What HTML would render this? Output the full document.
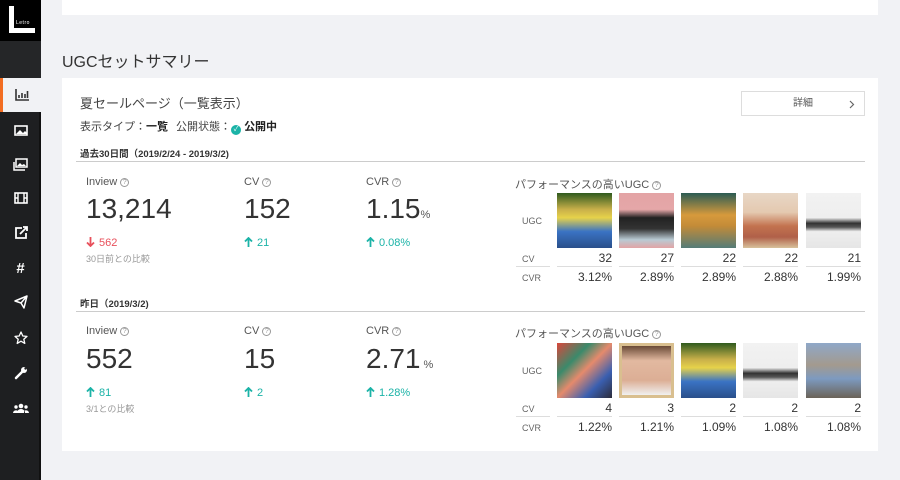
<!DOCTYPE html>
<html><head><meta charset="utf-8"><style>
*{margin:0;padding:0;box-sizing:border-box}
body{width:900px;height:480px;overflow:hidden;background:#f1f2f5;font-family:"Liberation Sans","Noto Sans CJK JP",sans-serif;color:#333;position:relative}
.a{position:absolute;white-space:nowrap}
#sb{position:absolute;left:0;top:0;width:41px;height:480px;background:#1e1f21;border-right:2px solid #111}
.ic{position:absolute;left:0;width:41px;height:34px;display:flex;align-items:center;justify-content:center;color:#fff;font-size:14px;font-weight:bold}
.card{position:absolute;background:#fff}
.sm{font-size:11px;color:#444}
.lbl{font-size:11px;color:#555}
.q{display:inline-block;width:9px;height:9px;border:1px solid #999;border-radius:50%;font-size:7px;line-height:7px;text-align:center;color:#999;vertical-align:1px;margin-left:3px}
.big{font-size:28px;color:#333}
.up{font-size:11px;color:#1bb3a7}
.dn{font-size:11px;color:#e8505b}
.gr{font-size:9px;color:#999}
.img{position:absolute;width:55px;height:55px}
.num{position:absolute;width:55px;text-align:right;font-size:12px;color:#333}
.ln{position:absolute;height:1px;background:#ddd}
.ar{display:inline-block;vertical-align:-1px;margin-right:4px}
</style></head><body>
<div id="sb">
 <div style="position:absolute;left:0;top:0;width:41px;height:41px;background:#000">
  <div style="position:absolute;left:9px;top:6px;width:5px;height:27px;background:#fff"></div>
  <div style="position:absolute;left:9px;top:28px;width:26px;height:5px;background:#fff"></div>
  <div class="a" style="left:16px;top:20px;font-size:5px;color:#fff;letter-spacing:.5px">Letro</div>
 </div>
 <div style="position:absolute;left:0;top:41px;width:41px;height:37px;background:#252628"></div>
 <div class="ic" style="top:78px;background:#f1f2f5;border-left:3px solid #f26d21;color:#333">
  <svg width="14" height="12" viewBox="0 0 14 12"><path d="M1 0v11h13" stroke="#333" stroke-width="1.6" fill="none"/><path d="M4 6v3M7 4v5M10 5v4M12.5 2v7" stroke="#333" stroke-width="1.6"/></svg></div>
 <div class="ic" style="top:113px"><svg width="14" height="11"><rect x="1" y="1" width="12" height="9" fill="none" stroke="#fff" stroke-width="1.6"/><path d="M2 9l4-4 3 3 2-2 2 2v1z" fill="#fff"/></svg></div>
 <div class="ic" style="top:147px"><svg width="15" height="13"><rect x="3" y="1" width="11" height="8" fill="none" stroke="#fff" stroke-width="1.5"/><path d="M1 4v8h11" stroke="#fff" stroke-width="1.5" fill="none"/><path d="M4 8l3-3 2 2 2-1 2 2z" fill="#fff"/></svg></div>
 <div class="ic" style="top:181px"><svg width="14" height="12"><rect x="1" y="1" width="12" height="10" fill="none" stroke="#fff" stroke-width="1.6"/><path d="M4 1v10M10 1v10M1 6h3M10 6h3" stroke="#fff" stroke-width="1.4"/></svg></div>
 <div class="ic" style="top:216px"><svg width="14" height="14"><path d="M8 2H2v10h10V7" fill="none" stroke="#fff" stroke-width="1.8"/><path d="M6 8l7-7M9 1h4v4" fill="none" stroke="#fff" stroke-width="1.8"/></svg></div>
 <div class="ic" style="top:251px;font-size:15px">#</div>
 <div class="ic" style="top:285px"><svg width="14" height="14"><path d="M1 6L13 1 10 13 7 8z M7 8l6-7" fill="none" stroke="#fff" stroke-width="1.5" stroke-linejoin="round"/></svg></div>
 <div class="ic" style="top:321px"><svg width="14" height="14"><path d="M7 1l1.8 4 4.2.4-3.2 2.8 1 4.2L7 10.2 3.2 12.4l1-4.2L1 5.4l4.2-.4z" fill="none" stroke="#fff" stroke-width="1.3" stroke-linejoin="round"/></svg></div>
 <div class="ic" style="top:356px"><svg width="14" height="14"><path d="M2 12l6-6" stroke="#fff" stroke-width="2.5" stroke-linecap="round"/><circle cx="10" cy="4" r="3" fill="#fff"/><circle cx="11.5" cy="2.5" r="1.2" fill="#1e1f21"/></svg></div>
 <div class="ic" style="top:391px"><svg width="16" height="10"><circle cx="8" cy="3" r="2.3" fill="#fff"/><circle cx="3" cy="4" r="1.7" fill="#fff"/><circle cx="13" cy="4" r="1.7" fill="#fff"/><path d="M4 10a4 4 0 018 0z M0 10a3 3 0 015-2v2z M16 10a3 3 0 00-5-2v2z" fill="#fff"/></svg></div>
</div>

<div class="card" style="left:62px;top:0;width:816px;height:15px"></div>
<div class="a" style="left:62px;top:48px;font-size:16px;color:#333">UGCセットサマリー</div>

<div class="card" style="left:62px;top:78px;width:816px;height:373px"></div>
<div class="a" style="left:80px;top:93px;font-size:13px;color:#444">夏セールページ（一覧表示）</div>
<div class="a sm" style="left:80px;top:118px">表示タイプ：<b style="color:#222">一覧</b></div>
<div class="a sm" style="left:176px;top:118px">公開状態：<span style="display:inline-block;width:10px;height:10px;border-radius:50%;background:#1bb3a7;vertical-align:-1px;color:#fff;font-size:7px;text-align:center;line-height:10px">✓</span> <b style="color:#222">公開中</b></div>
<div class="a" style="left:741px;top:91px;width:124px;height:25px;border:1px solid #ddd;font-size:10px;color:#555;text-align:center;line-height:23px">詳細<svg style="position:absolute;right:9px;top:8px" width="6" height="9"><path d="M1 1l3.5 3.5L1 8" fill="none" stroke="#666" stroke-width="1.2"/></svg></div>

<div class="a" style="left:80px;top:146px;font-size:9.5px;color:#333;font-weight:bold">過去30日間（2019/2/24 - 2019/3/2)</div>
<div class="ln" style="left:76px;top:161px;width:789px;background:#ccc"></div>

<div class="a lbl" style="left:86px;top:176px">Inview<span class="q">?</span></div>
<div class="a big" style="left:86px;top:193px">13,214</div>
<div class="a dn" style="left:86px;top:237px"><svg class="ar" width="9" height="10"><path d="M4.5 0v9M1 5.5l3.5 3.5L8 5.5" fill="none" stroke="#e8505b" stroke-width="1.8"/></svg>562</div>
<div class="a gr" style="left:86px;top:252px">30日前との比較</div>
<div class="a lbl" style="left:244px;top:176px">CV<span class="q">?</span></div>
<div class="a big" style="left:244px;top:193px">152</div>
<div class="a up" style="left:244px;top:237px"><svg class="ar" width="9" height="10"><path d="M4.5 10V1M1 4.5L4.5 1 8 4.5" fill="none" stroke="#1bb3a7" stroke-width="1.8"/></svg>21</div>
<div class="a lbl" style="left:366px;top:176px">CVR<span class="q">?</span></div>
<div class="a big" style="left:366px;top:193px">1.15<span style="font-size:11px;color:#555">%</span></div>
<div class="a up" style="left:366px;top:237px"><svg class="ar" width="9" height="10"><path d="M4.5 10V1M1 4.5L4.5 1 8 4.5" fill="none" stroke="#1bb3a7" stroke-width="1.8"/></svg>0.08%</div>

<div class="a lbl" style="left:515px;top:176px">パフォーマンスの高いUGC<span class="q">?</span></div>
<div class="a gr" style="left:522px;top:216px;color:#666">UGC</div>
<div class="a gr" style="left:522px;top:254px;color:#666">CV</div>
<div class="a gr" style="left:522px;top:273px;color:#666">CVR</div>
<div class="ln" style="left:516px;top:266px;width:34px"></div>
<div class="img" style="left:557px;top:193px;background:linear-gradient(180deg,#2f5a1e 0,#c9b04a 30%,#e6d24a 45%,#3a73c4 70%,#2a4f8a 100%)"></div>
<div class="img" style="left:619px;top:193px;background:linear-gradient(180deg,#e3a3a5 0,#e5a7a8 30%,#222 45%,#333 65%,#b9cbd4 85%,#e2a4a5 100%)"></div>
<div class="img" style="left:681px;top:193px;background:linear-gradient(180deg,#2b5c54 0,#d79a3c 40%,#c38b38 60%,#557c78 100%)"></div>
<div class="img" style="left:743px;top:193px;background:linear-gradient(180deg,#e8d7c6 0,#e4c9b0 35%,#c3734f 60%,#b06049 80%,#d8c19c 100%)"></div>
<div class="img" style="left:806px;top:193px;background:linear-gradient(180deg,#f2f2f2 0,#eee 45%,#333 55%,#555 62%,#eee 70%,#e6e6e6 100%)"></div>
<div class="num" style="left:557px;top:251px">32</div><div class="num" style="left:619px;top:251px">27</div><div class="num" style="left:681px;top:251px">22</div><div class="num" style="left:743px;top:251px">22</div><div class="num" style="left:806px;top:251px">21</div>
<div class="ln" style="left:557px;top:266px;width:55px"></div><div class="ln" style="left:619px;top:266px;width:55px"></div><div class="ln" style="left:681px;top:266px;width:55px"></div><div class="ln" style="left:743px;top:266px;width:55px"></div><div class="ln" style="left:806px;top:266px;width:55px"></div>
<div class="num" style="left:549px;top:270px;width:63px">3.12%</div><div class="num" style="left:611px;top:270px;width:63px">2.89%</div><div class="num" style="left:673px;top:270px;width:63px">2.89%</div><div class="num" style="left:735px;top:270px;width:63px">2.88%</div><div class="num" style="left:798px;top:270px;width:63px">1.99%</div>

<div class="a" style="left:80px;top:296px;font-size:9.5px;color:#333;font-weight:bold">昨日（2019/3/2)</div>
<div class="ln" style="left:76px;top:311px;width:789px;background:#ccc"></div>

<div class="a lbl" style="left:86px;top:325px">Inview<span class="q">?</span></div>
<div class="a big" style="left:86px;top:343px">552</div>
<div class="a up" style="left:86px;top:387px"><svg class="ar" width="9" height="10"><path d="M4.5 10V1M1 4.5L4.5 1 8 4.5" fill="none" stroke="#1bb3a7" stroke-width="1.8"/></svg>81</div>
<div class="a gr" style="left:86px;top:402px">3/1との比較</div>
<div class="a lbl" style="left:244px;top:325px">CV<span class="q">?</span></div>
<div class="a big" style="left:244px;top:343px">15</div>
<div class="a up" style="left:244px;top:387px"><svg class="ar" width="9" height="10"><path d="M4.5 10V1M1 4.5L4.5 1 8 4.5" fill="none" stroke="#1bb3a7" stroke-width="1.8"/></svg>2</div>
<div class="a lbl" style="left:366px;top:325px">CVR<span class="q">?</span></div>
<div class="a big" style="left:366px;top:343px">2.71<span style="font-size:11px;color:#555"> %</span></div>
<div class="a up" style="left:366px;top:387px"><svg class="ar" width="9" height="10"><path d="M4.5 10V1M1 4.5L4.5 1 8 4.5" fill="none" stroke="#1bb3a7" stroke-width="1.8"/></svg>1.28%</div>

<div class="a lbl" style="left:515px;top:325px">パフォーマンスの高いUGC<span class="q">?</span></div>
<div class="a gr" style="left:522px;top:366px;color:#666">UGC</div>
<div class="a gr" style="left:522px;top:404px;color:#666">CV</div>
<div class="a gr" style="left:522px;top:423px;color:#666">CVR</div>
<div class="ln" style="left:516px;top:416px;width:34px"></div>
<div class="img" style="left:557px;top:343px;background:linear-gradient(135deg,#d9473b 0,#3a8a6b 30%,#e58a6c 50%,#3a5fb0 75%,#2c2c3a 100%)"></div>
<div class="img" style="left:619px;top:343px;background:#d9bf8f"><div style="position:absolute;left:3px;top:3px;width:49px;height:49px;background:linear-gradient(180deg,#6a4a36 0,#e2b9a0 30%,#dcae95 70%,#f0f0f0 100%)"></div></div>
<div class="img" style="left:681px;top:343px;background:linear-gradient(180deg,#2f5a1e 0,#c9b04a 30%,#e6d24a 45%,#3a73c4 70%,#2a4f8a 100%)"></div>
<div class="img" style="left:743px;top:343px;background:linear-gradient(180deg,#f2f2f2 0,#eee 45%,#333 55%,#555 62%,#eee 70%,#e6e6e6 100%)"></div>
<div class="img" style="left:806px;top:343px;background:linear-gradient(180deg,#8fa8c8 0,#a39a8e 40%,#7d9ac0 65%,#6b6358 100%)"></div>
<div class="num" style="left:557px;top:401px">4</div><div class="num" style="left:619px;top:401px">3</div><div class="num" style="left:681px;top:401px">2</div><div class="num" style="left:743px;top:401px">2</div><div class="num" style="left:806px;top:401px">2</div>
<div class="ln" style="left:557px;top:416px;width:55px"></div><div class="ln" style="left:619px;top:416px;width:55px"></div><div class="ln" style="left:681px;top:416px;width:55px"></div><div class="ln" style="left:743px;top:416px;width:55px"></div><div class="ln" style="left:806px;top:416px;width:55px"></div>
<div class="num" style="left:549px;top:420px;width:63px">1.22%</div><div class="num" style="left:611px;top:420px;width:63px">1.21%</div><div class="num" style="left:673px;top:420px;width:63px">1.09%</div><div class="num" style="left:735px;top:420px;width:63px">1.08%</div><div class="num" style="left:798px;top:420px;width:63px">1.08%</div>
</body></html>
